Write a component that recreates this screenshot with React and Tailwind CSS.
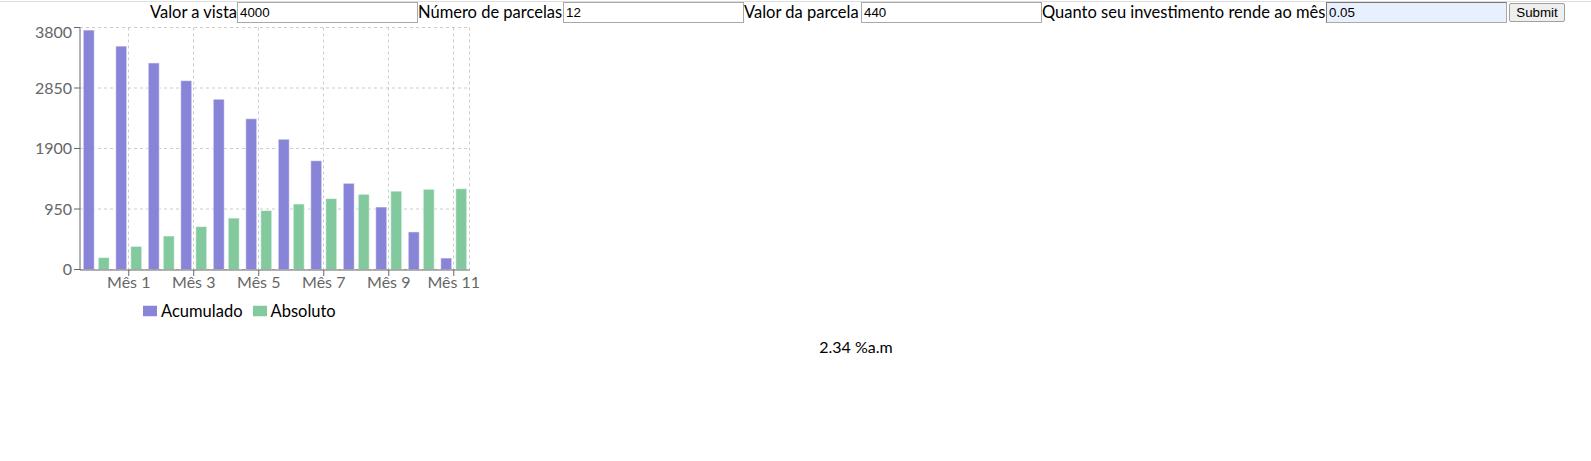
import React from "react";

/* =========================
   Dados do gráfico
========================= */
const VALOR_VISTA = 4000;
const PARCELA = 440;
const TAXA = 0.05;

const buildData = () => {
  const data = [];
  let acumulado = VALOR_VISTA;
  let absoluto = 0;
  for (let i = 0; i < 12; i++) {
    acumulado = acumulado * (1 + TAXA) - PARCELA;
    absoluto += acumulado * TAXA;
    data.push({ name: `Mês ${i}`, acumulado, absoluto });
  }
  return data;
};

const data = buildData();

const LEFT = 80;
const RIGHT = 470;
const TOP = 3.5;
const BOTTOM = 245.5;
const MAX = 3800;
const BAND = (RIGHT - LEFT) / data.length;

const yPos = (v) => BOTTOM - (v / MAX) * (BOTTOM - TOP);
const yTicks = [0, 950, 1900, 2850, 3800];
const xTicks = [1, 3, 5, 7, 9, 11];

const Chart = () => {
  return (
    <div className="w-[500px]">
      <svg width="500" height="278" className="block overflow-visible">
        {/* grid */}
        <g stroke="#ccc" strokeDasharray="3 3" fill="none">
          {yTicks.map((t) => (
            <line key={t} x1={LEFT} x2={RIGHT} y1={yPos(t)} y2={yPos(t)} />
          ))}
          {xTicks.map((i) => {
            const x = Math.floor(LEFT + BAND * i + BAND / 2) + 0.5;
            return <line key={i} x1={x} x2={x} y1={TOP} y2={BOTTOM} />;
          })}
          <line x1={RIGHT - 0.5} x2={RIGHT - 0.5} y1={TOP} y2={BOTTOM} />
        </g>

        {/* bars */}
        {data.map((d, i) => {
          const start = LEFT + BAND * i + 3.25;
          return (
            <g key={d.name} stroke="#fff" strokeOpacity="0.55">
              <rect
                x={start}
                y={yPos(d.acumulado)}
                width={11}
                height={BOTTOM - yPos(d.acumulado)}
                fill="#8884d8"
              />
              <rect
                x={start + 15}
                y={yPos(d.absoluto)}
                width={11}
                height={BOTTOM - yPos(d.absoluto)}
                fill="#82ca9d"
              />
            </g>
          );
        })}

        {/* y axis */}
        <line x1={LEFT} x2={LEFT} y1={TOP} y2={BOTTOM + 0.5} stroke="#666" />
        {yTicks.map((t) => (
          <g key={t}>
            <line x1={LEFT - 6} x2={LEFT} y1={yPos(t)} y2={yPos(t)} stroke="#666" />
            <text
              x={LEFT - 8}
              y={t === MAX ? 14.3 : yPos(t) + 5.7}
              textAnchor="end"
              fill="#666"
              fontSize="16"
            >
              {t}
            </text>
          </g>
        ))}

        {/* x axis */}
        <line x1={LEFT} x2={RIGHT} y1={BOTTOM + 0.5} y2={BOTTOM + 0.5} stroke="#666" />
        {xTicks.map((i) => {
          const x = LEFT + BAND * i + BAND / 2;
          return (
            <g key={i}>
              <line x1={x} x2={x} y1={BOTTOM + 0.5} y2={BOTTOM + 6.5} stroke="#666" />
              <text x={x} y={264.3} textAnchor="middle" fill="#666" fontSize="16">
                {`Mês ${i}`}
              </text>
            </g>
          );
        })}
      </svg>

      {/* legend */}
      <div className="flex items-center h-[18px] pl-[143px] text-[16.5px] text-black">
        <svg width="14" height="14" className="mr-[4px]">
          <rect x="0" y="1.75" width="14" height="10.5" fill="#8884d8" />
        </svg>
        <span className="mr-[10px]">Acumulado</span>
        <svg width="14" height="14" className="mr-[4px]">
          <rect x="0" y="1.75" width="14" height="10.5" fill="#82ca9d" />
        </svg>
        <span>Absoluto</span>
      </div>
    </div>
  );
};

const inputClass =
  "w-[181px] h-[21px] border border-[#a9a9a9] bg-white px-[2px] text-[13.33px] text-black font-['Liberation_Sans',Arial,sans-serif] outline-none";

const App = () => {
  return (
    <div className="min-h-screen bg-white overflow-hidden font-['Lato','Open_Sans',sans-serif] text-black">
      <div className="mt-[1px] border-t border-[#dedede]" />

      {/* formulário */}
      <form
        className="flex items-center h-[21px] mb-[1px] pl-[150px] text-[16.5px] leading-[21px] whitespace-nowrap"
        onSubmit={(e) => e.preventDefault()}
      >
        <label className="w-[87px]">Valor a vista</label>
        <input className={inputClass} defaultValue="4000" />
        <label className="w-[145px]">Número de parcelas</label>
        <input className={inputClass} defaultValue="12" />
        <label className="w-[117px]">Valor da parcela</label>
        <input className={inputClass} defaultValue="440" />
        <label className="w-[284px]">Quanto seu investimento rende ao mês</label>
        <input
          className="w-[181px] h-[21px] border border-[#a9a9a9] border-t-[#7a7a7a] border-l-[#7a7a7a] bg-[#e8f0fe] px-[2px] text-[13.33px] text-black font-['Liberation_Sans',Arial,sans-serif] outline-none"
          defaultValue="0.05"
        />
        <button
          type="submit"
          className="ml-[2px] w-[56px] h-[19px] border border-[#a0a0a0] rounded-[2px] bg-[#efefef] text-[13.33px] leading-[15px] text-black font-['Liberation_Sans',Arial,sans-serif]"
        >
          Submit
        </button>
      </form>

      <Chart />

      <div className="w-[1712px] mt-[15px] text-center text-[16px] leading-[24px]">
        2.34 %a.m
      </div>
    </div>
  );
};

export default App;
